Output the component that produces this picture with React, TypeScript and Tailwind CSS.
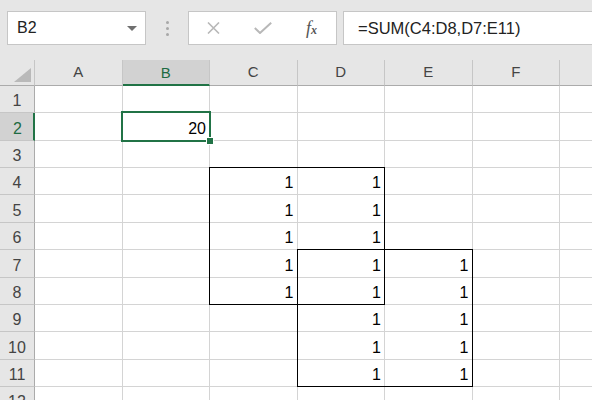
import React from "react";

const columns = ["A", "B", "C", "D", "E", "F", "G"];
const rows = [1, 2, 3, 4, 5, 6, 7, 8, 9, 10, 11, 12];

const values: Record<string, string> = {
  B2: "20",
  C4: "1", C5: "1", C6: "1", C7: "1", C8: "1",
  D4: "1", D5: "1", D6: "1", D7: "1", D8: "1", D9: "1", D10: "1", D11: "1",
  E7: "1", E8: "1", E9: "1", E10: "1", E11: "1",
};

const gridTemplate = "grid grid-cols-[35px_repeat(7,87.5px)] grid-rows-[26px_repeat(12,27.36px)]";

function FormulaBar() {
  return (
    <div className="flex h-[60px] items-start pt-[11px]">
      {/* Name box */}
      <div className="ml-[7px] flex h-[34px] w-[139px] shrink-0 items-center justify-between border border-[#c6c6c6] bg-white pl-[9px] pr-[8px]">
        <span className="text-[16px] leading-none text-[#222]">B2</span>
        <svg width="10" height="5" viewBox="0 0 10 5">
          <polygon points="0,0 10,0 5,5" fill="#6f6f6f" />
        </svg>
      </div>

      {/* grip dots */}
      <div className="flex h-[34px] w-[42px] shrink-0 flex-col items-center justify-center gap-[3px]">
        <span className="h-[3px] w-[3px] rounded-full bg-[#a8a8a8]" />
        <span className="h-[3px] w-[3px] rounded-full bg-[#a8a8a8]" />
        <span className="h-[3px] w-[3px] rounded-full bg-[#a8a8a8]" />
      </div>

      {/* cancel / enter / fx */}
      <div className="flex h-[34px] w-[149px] shrink-0 items-center border border-[#c6c6c6] bg-white">
        <div className="flex flex-1 justify-center">
          <svg width="15" height="12" viewBox="0 0 15 12">
            <path d="M2 0.5 L13 11.5 M13 0.5 L2 11.5" stroke="#b8b8b8" strokeWidth="1.6" fill="none" />
          </svg>
        </div>
        <div className="flex flex-1 justify-center">
          <svg width="18" height="12" viewBox="0 0 18 12">
            <path d="M0.8 6 L6 11 L17.2 0.8" stroke="#b8b8b8" strokeWidth="2" fill="none" />
          </svg>
        </div>
        <div className="flex flex-1 justify-center">
          <span className="font-['Liberation_Serif',serif] text-[18px] italic leading-none text-[#555]">
            f<span className="text-[12px] font-bold">x</span>
          </span>
        </div>
      </div>

      {/* formula input */}
      <div className="ml-[6px] flex h-[34px] w-[280px] shrink-0 items-center border border-[#c6c6c6] bg-white pl-[14px]">
        <span className="text-[16.5px] leading-none text-[#222]">=SUM(C4:D8,D7:E11)</span>
      </div>
    </div>
  );
}

export default function App() {
  return (
    <div className="h-[400px] w-[592px] overflow-hidden bg-[#e6e6e6] font-['Liberation_Sans',Arial,sans-serif]">
      <FormulaBar />

      <div className="relative w-[647.5px]">
        <div className={gridTemplate}>
          {/* corner */}
          <div className="flex items-end justify-end border-r border-b border-r-[#c6c6c6] border-b-[#ababab] bg-[#e6e6e6] pr-[3px] pb-[3px]">
            <svg width="17" height="14" viewBox="0 0 17 14">
              <polygon points="17,0 17,14 0,14" fill="#b9b9b9" />
            </svg>
          </div>

          {/* column headers */}
          {columns.map((c) =>
            c === "B" ? (
              <div
                key={c}
                className="flex items-center justify-center border-r border-b-2 border-r-[#c6c6c6] border-b-[#217346] bg-[#d2d2d2] pt-[2px] text-[15px] text-[#1e6b42]"
              >
                {c}
              </div>
            ) : (
              <div
                key={c}
                className="flex items-center justify-center border-r border-b border-r-[#c6c6c6] border-b-[#ababab] bg-[#e6e6e6] text-[15px] text-[#444]"
              >
                {c === "G" ? "" : c}
              </div>
            )
          )}

          {rows.map((r) => (
            <React.Fragment key={r}>
              {r === 2 ? (
                <div className="flex items-end justify-center border-r-2 border-b border-r-[#217346] border-b-[#c6c6c6] bg-[#d2d2d2] pb-[3px] pl-[2px] text-[16px] leading-none text-[#1e6b42]">
                  {r}
                </div>
              ) : (
                <div className="flex items-end justify-center border-r border-b border-r-[#ababab] border-b-[#c6c6c6] bg-[#e6e6e6] pb-[3px] text-[16px] leading-none text-[#444]">
                  {r}
                </div>
              )}
              {columns.map((c) => (
                <div
                  key={c}
                  className="flex items-end justify-end border-r border-b border-[#d4d4d4] bg-white pr-[3px] pb-[3px] text-[16px] leading-none text-black"
                >
                  {values[`${c}${r}`] ?? ""}
                </div>
              ))}
            </React.Fragment>
          ))}
        </div>

        {/* overlay layer: range borders and active cell */}
        <div className={`pointer-events-none absolute inset-0 ${gridTemplate}`}>
          <div className="col-start-4 col-end-6 row-start-5 row-end-10 -mt-px -ml-px border border-black" />
          <div className="col-start-5 col-end-7 row-start-8 row-end-13 -mt-px -ml-px border border-black" />
          <div className="relative col-start-3 row-start-3 -mt-[2px] -mr-px -mb-px -ml-[2px] border-2 border-[#217346]">
            <span className="absolute right-[-5px] bottom-[-5px] h-[8px] w-[8px] border border-white bg-[#217346]" />
          </div>
        </div>
      </div>
    </div>
  );
}
